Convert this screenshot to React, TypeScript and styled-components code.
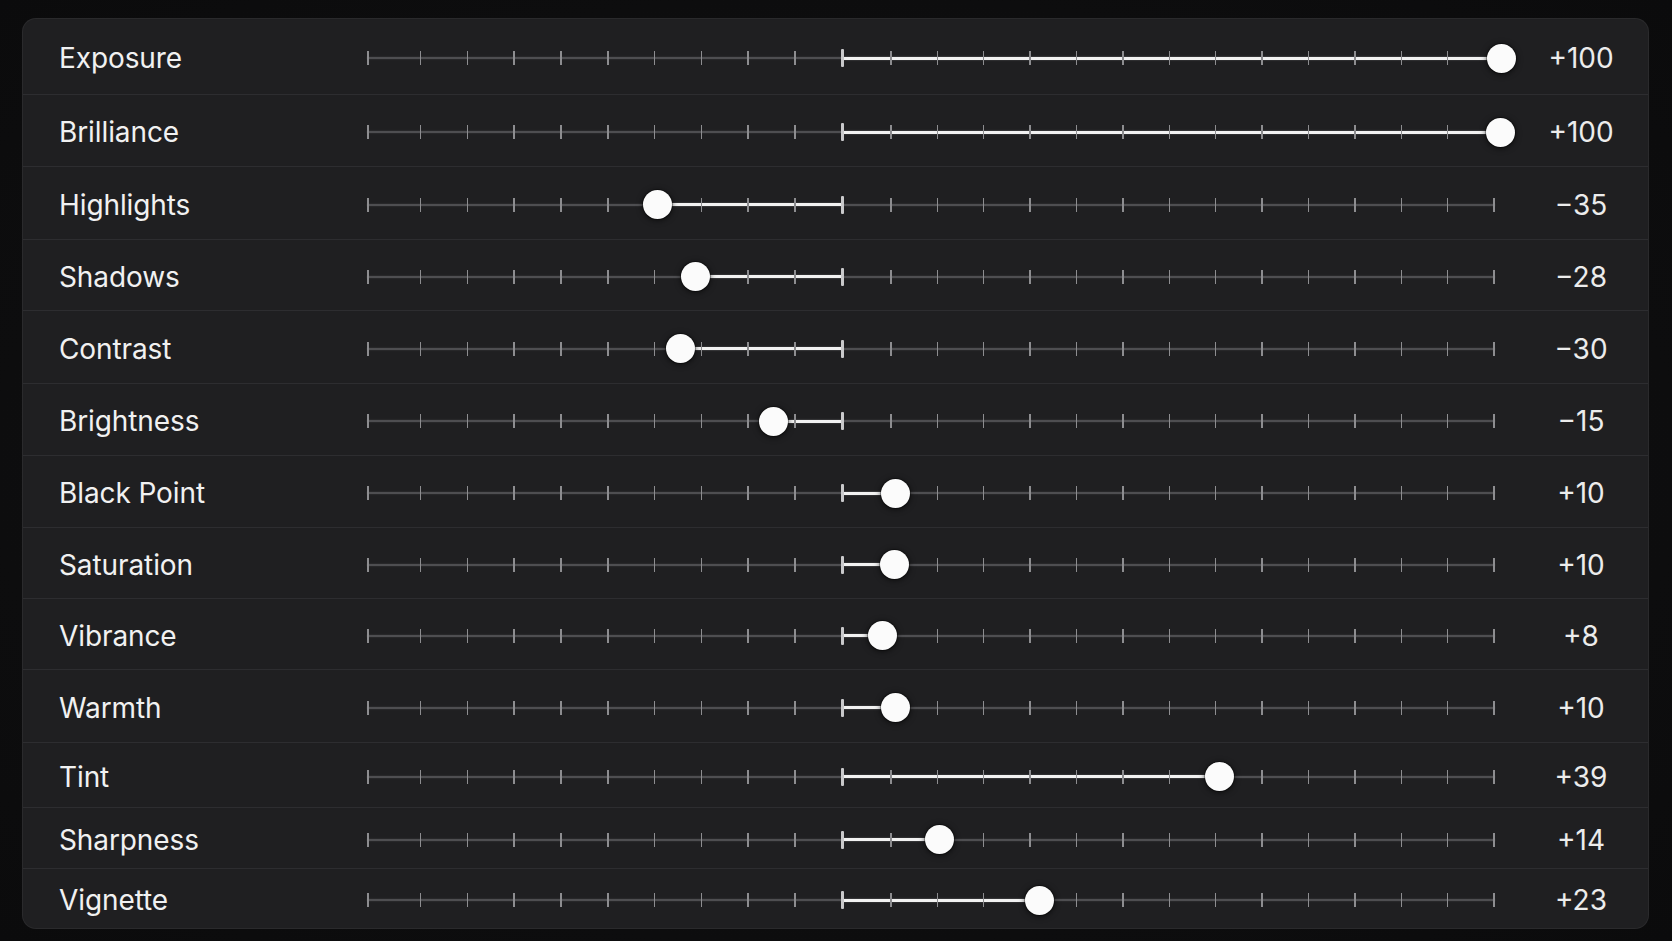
import React from "react";
import styled, { createGlobalStyle } from "styled-components";

const GlobalStyle = createGlobalStyle`
  html, body {
    margin: 0;
    padding: 0;
    background: #0d0d0e;
  }
  body {
    font-family: Inter, "Noto Sans", "Liberation Sans", sans-serif;
    -webkit-font-smoothing: antialiased;
  }
`;

const TRACK_W = 1128;
const ZERO = 475.7;
const FIRST_GAP = 52.7;

type Adjustment = {
  label: string;
  value: string;
  knob: number; // px from track start
  h: number; // row height
};

const rows: Adjustment[] = [
  { label: "Exposure", value: "+100", knob: 1134, h: 75 },
  { label: "Brilliance", value: "+100", knob: 1133.5, h: 72 },
  { label: "Highlights", value: "\u221235", knob: 290.7, h: 73 },
  { label: "Shadows", value: "\u221228", knob: 328.7, h: 71 },
  { label: "Contrast", value: "\u221230", knob: 313, h: 73 },
  { label: "Brightness", value: "\u221215", knob: 406.3, h: 72 },
  { label: "Black Point", value: "+10", knob: 528, h: 72 },
  { label: "Saturation", value: "+10", knob: 527.6, h: 71 },
  { label: "Vibrance", value: "+8", knob: 515.7, h: 71 },
  { label: "Warmth", value: "+10", knob: 528.3, h: 73 },
  { label: "Tint", value: "+39", knob: 852.3, h: 65 },
  { label: "Sharpness", value: "+14", knob: 572.3, h: 61 },
  { label: "Vignette", value: "+23", knob: 672.3, h: 60 },
];

const Page = styled.div`
  width: 1672px;
  height: 941px;
  box-sizing: border-box;
  padding: 18px 0 0 22px;
  background: radial-gradient(ellipse at 50% 50%, #121213 0%, #0b0b0c 100%);
`;

const Panel = styled.div`
  width: 1627px;
  height: 911px;
  box-sizing: border-box;
  border-radius: 14px;
  background: #1f1f21;
  border: 1px solid rgba(255, 255, 255, 0.05);
  display: flex;
  flex-direction: column;
  overflow: hidden;
`;

const Row = styled.div<{ $h: number; $first: boolean }>`
  height: ${(p) => p.$h}px;
  box-sizing: border-box;
  flex: none;
  display: grid;
  grid-template-columns: 308px ${TRACK_W}px 1fr;
  align-items: center;
  padding: 3px 0 0 36px;
  border-top: ${(p) => (p.$first ? "none" : "1px solid #2d2d30")};
`;

const Label = styled.div`
  font-size: 28px;
  font-weight: 400;
  color: #f1f1f1;
  letter-spacing: -0.1px;
  white-space: nowrap;
`;

const Value = styled.div`
  font-size: 28px;
  font-weight: 400;
  color: #ececec;
  text-align: center;
  padding-left: 19px;
  white-space: nowrap;
`;

const Track = styled.div`
  position: relative;
  height: 30px;
  display: flex;
  align-items: center;
`;

const BaseLine = styled.div`
  flex: 1;
  height: 2px;
  background: #4e4e51;
  box-shadow: 0 0 2px rgba(130, 130, 130, 0.35);
`;

const Fill = styled.div`
  position: absolute;
  top: 50%;
  height: 3px;
  margin-top: -1.5px;
  background: #f2f2f2;
  box-shadow: 0 0 2px rgba(255, 255, 255, 0.25);
`;

const TickLayer = styled.div`
  position: absolute;
  inset: 0;
  display: flex;
  align-items: center;
  pointer-events: none;
`;

const Half = styled.div<{ $w?: number }>`
  display: flex;
  align-items: center;
  justify-content: space-between;
  height: 100%;
  ${(p) => (p.$w ? `width: ${p.$w}px; flex: none;` : "flex: 1;")}
`;

const EdgeTick = styled.div<{ $gap: number }>`
  flex: none;
  width: 1.5px;
  height: 14px;
  margin-right: ${(p) => p.$gap}px;
  background: #8d8d90;
`;

const Tick = styled.div<{ $hidden?: boolean }>`
  width: 1.5px;
  height: 14px;
  background: #8d8d90;
  visibility: ${(p) => (p.$hidden ? "hidden" : "visible")};
`;

const ZeroTick = styled.div`
  width: 2.5px;
  height: 18px;
  background: #c9c9cb;
  border-radius: 1px;
`;

const Knob = styled.div`
  position: absolute;
  top: 50%;
  width: 29px;
  height: 29px;
  margin: -14.5px 0 0 -14.5px;
  border-radius: 50%;
  background: #fbfbfb;
  box-shadow: 0 0 0 1px rgba(0, 0, 0, 0.3), 0 1px 6px rgba(0, 0, 0, 0.7);
`;

function Slider({ knob }: { knob: number }) {
  const left = Math.min(knob, ZERO);
  const width = Math.abs(knob - ZERO);
  return (
    <Track>
      <BaseLine />
      <Fill style={{ left, width }} />
      <TickLayer>
        <EdgeTick $gap={FIRST_GAP - 1.5} />
        <Half $w={ZERO + 1 - FIRST_GAP}>
          {Array.from({ length: 9 }).map((_, i) => (
            <Tick key={i} />
          ))}
          <ZeroTick />
        </Half>
        <Half>
          <Tick $hidden />
          {Array.from({ length: 14 }).map((_, i) => (
            <Tick key={i} />
          ))}
        </Half>
      </TickLayer>
      <Knob style={{ left: knob }} />
    </Track>
  );
}

export default function App() {
  return (
    <>
      <GlobalStyle />
      <Page>
        <Panel>
          {rows.map((r, i) => (
            <Row key={r.label} $h={r.h} $first={i === 0}>
              <Label>{r.label}</Label>
              <Slider knob={r.knob} />
              <Value>{r.value}</Value>
            </Row>
          ))}
        </Panel>
      </Page>
    </>
  );
}
